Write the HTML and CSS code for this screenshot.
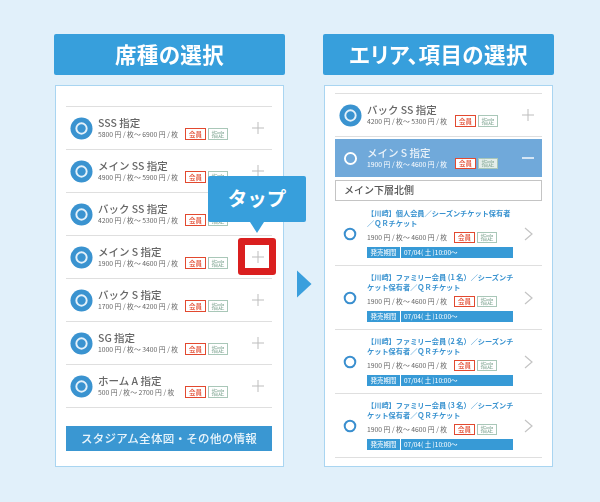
FILE: index.html
```html
<!DOCTYPE html>
<html lang="ja">
<head>
<meta charset="utf-8">
<title>席種の選択</title>
<link rel="stylesheet" href="styles.css">
</head>
<body>
<main class="stage">
  <section class="col">
    <h2 class="head">席種の選択</h2>
    <div class="panel panel-left">
      <ul class="rows">
        <li class="row"><svg class="disc" viewBox="0 0 24 24"><circle cx="12" cy="12" r="11.5" fill="#3a93d0"/><circle cx="12" cy="12" r="5.4" fill="none" stroke="#e4f1fa" stroke-width="2"/></svg><div class="info"><p class="name">SSS 指定</p><p class="price">5800 円 / 枚〜 6900 円 / 枚</p></div><div class="tags"><span class="tag red">会員</span><span class="tag green">指定</span></div><svg class="plus" viewBox="0 0 12 12"><path d="M6 0v12M0 6h12"/></svg></li>
        <li class="row"><svg class="disc" viewBox="0 0 24 24"><circle cx="12" cy="12" r="11.5" fill="#3a93d0"/><circle cx="12" cy="12" r="5.4" fill="none" stroke="#e4f1fa" stroke-width="2"/></svg><div class="info"><p class="name">メイン SS 指定</p><p class="price">4900 円 / 枚〜 5900 円 / 枚</p></div><div class="tags"><span class="tag red">会員</span><span class="tag green">指定</span></div><svg class="plus" viewBox="0 0 12 12"><path d="M6 0v12M0 6h12"/></svg></li>
        <li class="row"><svg class="disc" viewBox="0 0 24 24"><circle cx="12" cy="12" r="11.5" fill="#3a93d0"/><circle cx="12" cy="12" r="5.4" fill="none" stroke="#e4f1fa" stroke-width="2"/></svg><div class="info"><p class="name">バック SS 指定</p><p class="price">4200 円 / 枚〜 5300 円 / 枚</p></div><div class="tags"><span class="tag red">会員</span><span class="tag green">指定</span></div><svg class="plus" viewBox="0 0 12 12"><path d="M6 0v12M0 6h12"/></svg></li>
        <li class="row"><svg class="disc" viewBox="0 0 24 24"><circle cx="12" cy="12" r="11.5" fill="#3a93d0"/><circle cx="12" cy="12" r="5.4" fill="none" stroke="#e4f1fa" stroke-width="2"/></svg><div class="info"><p class="name">メイン S 指定</p><p class="price">1900 円 / 枚〜 4600 円 / 枚</p></div><div class="tags"><span class="tag red">会員</span><span class="tag green">指定</span></div><svg class="plus" viewBox="0 0 12 12"><path d="M6 0v12M0 6h12"/></svg></li>
        <li class="row"><svg class="disc" viewBox="0 0 24 24"><circle cx="12" cy="12" r="11.5" fill="#3a93d0"/><circle cx="12" cy="12" r="5.4" fill="none" stroke="#e4f1fa" stroke-width="2"/></svg><div class="info"><p class="name">バック S 指定</p><p class="price">1700 円 / 枚〜 4200 円 / 枚</p></div><div class="tags"><span class="tag red">会員</span><span class="tag green">指定</span></div><svg class="plus" viewBox="0 0 12 12"><path d="M6 0v12M0 6h12"/></svg></li>
        <li class="row"><svg class="disc" viewBox="0 0 24 24"><circle cx="12" cy="12" r="11.5" fill="#3a93d0"/><circle cx="12" cy="12" r="5.4" fill="none" stroke="#e4f1fa" stroke-width="2"/></svg><div class="info"><p class="name">SG 指定</p><p class="price">1000 円 / 枚〜 3400 円 / 枚</p></div><div class="tags"><span class="tag red">会員</span><span class="tag green">指定</span></div><svg class="plus" viewBox="0 0 12 12"><path d="M6 0v12M0 6h12"/></svg></li>
        <li class="row"><svg class="disc" viewBox="0 0 24 24"><circle cx="12" cy="12" r="11.5" fill="#3a93d0"/><circle cx="12" cy="12" r="5.4" fill="none" stroke="#e4f1fa" stroke-width="2"/></svg><div class="info"><p class="name">ホーム A 指定</p><p class="price">500 円 / 枚〜 2700 円 / 枚</p></div><div class="tags"><span class="tag red">会員</span><span class="tag green">指定</span></div><svg class="plus" viewBox="0 0 12 12"><path d="M6 0v12M0 6h12"/></svg></li>
      </ul>
      <div class="map-btn">スタジアム全体図・その他の情報</div>
    </div>
  </section>

  <svg class="next" viewBox="0 0 16 28"><path d="M1 0.5 15.5 14 1 27.5Z" fill="#3a9fdd"/></svg>

  <section class="col">
    <h2 class="head">エリア、項目の選択</h2>
    <div class="panel panel-right">
      <ul class="rows">
        <li class="row"><svg class="disc" viewBox="0 0 24 24"><circle cx="12" cy="12" r="11.5" fill="#3a93d0"/><circle cx="12" cy="12" r="5.4" fill="none" stroke="#e4f1fa" stroke-width="2"/></svg><div class="info"><p class="name">バック SS 指定</p><p class="price">4200 円 / 枚〜 5300 円 / 枚</p></div><div class="tags"><span class="tag red">会員</span><span class="tag green">指定</span></div><svg class="plus" viewBox="0 0 12 12"><path d="M6 0v12M0 6h12"/></svg></li>
      </ul>
      <div class="row open"><svg class="disc" viewBox="0 0 24 24"><circle cx="12" cy="12" r="5.8" fill="none" stroke="#fff" stroke-width="2"/></svg><div class="info"><p class="name">メイン S 指定</p><p class="price">1900 円 / 枚〜 4600 円 / 枚</p></div><div class="tags"><span class="tag red">会員</span><span class="tag green">指定</span></div><svg class="plus" viewBox="0 0 12 12"><path d="M0 6h12"/></svg></div>
      <div class="area">メイン下層北側</div>
      <ul class="items">
        <li class="item"><svg class="dot" viewBox="0 0 14 14"><circle cx="7" cy="7" r="5.3" fill="none" stroke="#3a8fcf" stroke-width="2"/></svg><div class="item-body"><p class="item-title">【川崎】個人会員／シーズンチケット保有者<br>／ＱＲチケット</p><div class="item-mid"><p class="price">1900 円 / 枚〜 4600 円 / 枚</p><div class="tags"><span class="tag red">会員</span><span class="tag green">指定</span></div></div><div class="sale"><span class="sale-k">発売期間</span><span class="sale-v">07/04( 土 )10:00〜</span></div></div><svg class="chev" viewBox="0 0 9 14"><path d="M1 1l7 6-7 6"/></svg></li>
        <li class="item"><svg class="dot" viewBox="0 0 14 14"><circle cx="7" cy="7" r="5.3" fill="none" stroke="#3a8fcf" stroke-width="2"/></svg><div class="item-body"><p class="item-title">【川崎】ファミリー会員 (1 名）／シーズンチ<br>ケット保有者／ＱＲチケット</p><div class="item-mid"><p class="price">1900 円 / 枚〜 4600 円 / 枚</p><div class="tags"><span class="tag red">会員</span><span class="tag green">指定</span></div></div><div class="sale"><span class="sale-k">発売期間</span><span class="sale-v">07/04( 土 )10:00〜</span></div></div><svg class="chev" viewBox="0 0 9 14"><path d="M1 1l7 6-7 6"/></svg></li>
        <li class="item"><svg class="dot" viewBox="0 0 14 14"><circle cx="7" cy="7" r="5.3" fill="none" stroke="#3a8fcf" stroke-width="2"/></svg><div class="item-body"><p class="item-title">【川崎】ファミリー会員 (2 名）／シーズンチ<br>ケット保有者／ＱＲチケット</p><div class="item-mid"><p class="price">1900 円 / 枚〜 4600 円 / 枚</p><div class="tags"><span class="tag red">会員</span><span class="tag green">指定</span></div></div><div class="sale"><span class="sale-k">発売期間</span><span class="sale-v">07/04( 土 )10:00〜</span></div></div><svg class="chev" viewBox="0 0 9 14"><path d="M1 1l7 6-7 6"/></svg></li>
        <li class="item"><svg class="dot" viewBox="0 0 14 14"><circle cx="7" cy="7" r="5.3" fill="none" stroke="#3a8fcf" stroke-width="2"/></svg><div class="item-body"><p class="item-title">【川崎】ファミリー会員 (3 名）／シーズンチ<br>ケット保有者／ＱＲチケット</p><div class="item-mid"><p class="price">1900 円 / 枚〜 4600 円 / 枚</p><div class="tags"><span class="tag red">会員</span><span class="tag green">指定</span></div></div><div class="sale"><span class="sale-k">発売期間</span><span class="sale-v">07/04( 土 )10:00〜</span></div></div><svg class="chev" viewBox="0 0 9 14"><path d="M1 1l7 6-7 6"/></svg></li>
      </ul>
    </div>
  </section>

  <div class="tip">タップ</div>
  <div class="hit"></div>
</main>
</body>
</html>
```
FILE: styles.css
```css
* { box-sizing: border-box; }
html, body { margin: 0; padding: 0; }
body {
  width: 600px;
  height: 502px;
  overflow: hidden;
  background: #e1f0fa;
  font-family: "Noto Sans CJK JP", "Noto Sans", sans-serif;
}
p, h2, ul { margin: 0; padding: 0; }
ul { list-style: none; }

.stage {
  position: relative;
  display: flex;
  align-items: flex-start;
  height: 502px;
  padding: 34px 0 0 54px;
  filter: blur(0.3px);
}
.col { width: 231px; flex: none; }
.next { width: 16px; height: 28px; flex: none; margin: 236px 11px 0 11px; }

.head {
  height: 41px;
  background: #379fdc;
  border-radius: 2px;
  color: #fff;
  font-size: 21.5px;
  font-weight: 700;
  line-height: 40px;
  text-align: center;
  font-feature-settings: "palt";
  letter-spacing: 0.4px;
}
.panel {
  height: 382px;
  margin: 10px 1px 0;
  background: #fff;
  border: 1px solid #a9d5f1;
}
.panel-left { padding: 20px 11px 0 10px; }
.panel-right { padding: 7px 10px 0 10px; }

.rows { border-top: 1px solid #dfdfdf; }
.row {
  display: flex;
  align-items: center;
  height: 43px;
  padding: 0 5px 0 4px;
  border-bottom: 1px solid #dfdfdf;
}
.disc { width: 23px; height: 23px; flex: none; margin-right: 5px; }
.info { flex: 1; min-width: 0; margin-top: -2px; }
.name {
  font-size: 10.5px;
  line-height: 13px;
  color: #666;
  font-weight: 500;
  white-space: nowrap;
}
.price {
  font-size: 6.8px;
  line-height: 10px;
  color: #666;
  white-space: nowrap;
}
.tags { display: flex; gap: 2px; flex: none; align-self: flex-end; margin: 0 24px 9px 0; }
.tag {
  display: flex;
  align-items: center;
  justify-content: center;
  width: 21px;
  height: 12px;
  font-size: 6.5px;
  line-height: 1;
  font-weight: 500;
  background: #fff;
}
.red { border: 1.6px solid #e2492f; color: #e2492f; }
.green { border: 1.6px solid #a9c7b8; color: #93b3a3; width: 20px; }
.plus { width: 12px; height: 12px; flex: none; margin-right: 3px; }
.plus path { fill: none; stroke: #bdbdbd; stroke-width: 1; }

.open {
  height: 38px;
  margin-top: 2px;
  background: #70a9da;
  border-bottom: 0;
}
.open .name { color: #fff; opacity: .85; }
.open .price { color: #fff; }
.open .green { background: #e4eeea; }
.open .tag { height: 11px; }
.open .tags { margin-bottom: 8px; }
.open .plus path { stroke: #fff; stroke-width: 1.4; }

.area {
  height: 21px;
  margin-top: 3px;
  padding-left: 8px;
  border: 1px solid #c4c4c4;
  font-size: 10px;
  line-height: 18px;
  font-weight: 500;
  color: #555;
}
.items { margin-top: 1px; }
.item {
  display: flex;
  align-items: center;
  height: 64px;
  padding: 0 7px 0 8px;
  border-bottom: 1px solid #dfdfdf;
}
.dot { width: 14px; height: 14px; flex: none; margin-right: 10px; }
.item-body { width: 146px; flex: none; }
.item-title {
  font-size: 7.2px;
  line-height: 9.6px;
  font-weight: 700;
  color: #3a93d0;
  white-space: nowrap;
}
.item-mid { display: flex; align-items: center; justify-content: space-between; height: 11px; margin: 3px 0 4px; }
.item .tags { align-self: center; margin: 0 16px 0 0; }
.item .tag { height: 11px; }
.sale { display: flex; height: 11px; background: #379ad6; color: #fff; font-size: 6.5px; line-height: 11px; }
.sale-k { width: 34px; text-align: center; border-right: 1px solid #fff; }
.sale-v { padding-left: 3px; }
.chev { width: 9px; height: 14px; flex: none; margin-left: 11px; }
.chev path { fill: none; stroke: #c4c4c4; stroke-width: 1.2; }

.map-btn {
  height: 25px;
  margin-top: 18px;
  background: #3a97d2;
  color: #e8f4fb;
  font-size: 11.5px;
  line-height: 25px;
  font-weight: 500;
  text-align: center;
  letter-spacing: 0.3px;
}

.tip {
  position: absolute;
  left: 208px;
  top: 176px;
  width: 98px;
  height: 46px;
  background: #379fdc;
  border-radius: 2px;
  color: #fff;
  font-size: 19.5px;
  font-weight: 700;
  line-height: 43px;
  text-align: center;
}
.tip::after {
  content: "";
  position: absolute;
  left: 42px;
  top: 46px;
  border: 7px solid transparent;
  border-top: 11px solid #379fdc;
  border-bottom: 0;
}
.hit {
  position: absolute;
  left: 238px;
  top: 238px;
  width: 38px;
  height: 37px;
  border: 7px solid #da1f1f;
  border-radius: 3px;
}
```
